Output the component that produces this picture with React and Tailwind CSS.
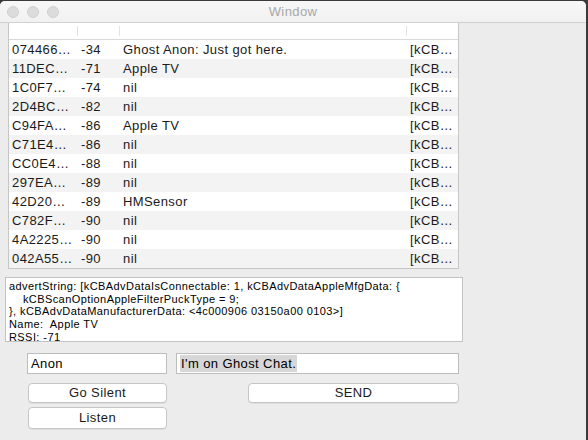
import React from "react";

const rows = [
  ["074466…", "-34", "Ghost Anon: Just got here."],
  ["11DEC…", "-71", "Apple TV"],
  ["1C0F7…", "-74", "nil"],
  ["2D4BC…", "-82", "nil"],
  ["C94FA…", "-86", "Apple TV"],
  ["C71E4…", "-86", "nil"],
  ["CC0E4…", "-88", "nil"],
  ["297EA…", "-89", "nil"],
  ["42D20…", "-89", "HMSensor"],
  ["C782F…", "-90", "nil"],
  ["4A2225…", "-90", "nil"],
  ["042A55…", "-90", "nil"],
];

const font = { fontFamily: '"Liberation Sans", Arial, Helvetica, sans-serif' };

export default function App() {
  return (
    <div className="w-[588px] h-[440px] bg-[#3a3a3a] overflow-hidden" style={font}>
      <div className="mt-px w-[586px] h-[439px] bg-[#ececec] rounded-t-[5px] overflow-hidden flex flex-col">
        {/* Title bar */}
        <div className="h-[22px] shrink-0 relative bg-gradient-to-b from-[#f7f7f7] to-[#f1f1f1] border-b border-[#d1d1d1] flex items-center">
          <div className="flex gap-[8px] pl-[7px]">
            <div className="w-[12px] h-[12px] rounded-full bg-[#dcdcdc] border border-[#d0d0d0]" />
            <div className="w-[12px] h-[12px] rounded-full bg-[#dcdcdc] border border-[#d0d0d0]" />
            <div className="w-[12px] h-[12px] rounded-full bg-[#dcdcdc] border border-[#d0d0d0]" />
          </div>
          <div className="absolute inset-0 flex items-center justify-center text-[13px] tracking-[0.4px] text-[#a8a8a8]">
            Window
          </div>
        </div>

        {/* Table */}
        <div className="ml-[8px] w-[451px] h-[246px] shrink-0 bg-white border-l border-r border-b border-[#c6c6c6] overflow-hidden flex flex-col">
          <div className="h-[17px] shrink-0 flex border-b border-[#d9d9d9]">
            <div className="w-[69px] flex justify-end items-center"><div className="w-px h-[10px] bg-[#e2e2e2]" /></div>
            <div className="w-[42px] flex justify-end items-center"><div className="w-px h-[10px] bg-[#e2e2e2]" /></div>
            <div className="w-[287px] flex justify-end items-center"><div className="w-px h-[10px] bg-[#e2e2e2]" /></div>
            <div className="flex-1" />
          </div>
          {rows.map((r, i) => (
            <div
              key={i}
              className={`h-[19px] shrink-0 flex items-center text-[13px] tracking-[0.4px] text-[#1a1a1a] ${i % 2 === 1 ? "bg-[#f3f3f3]" : "bg-white"}`}
            >
              <div className="w-[69px] pl-[3px] whitespace-nowrap overflow-hidden">{r[0]}</div>
              <div className="w-[42px] pl-[3px]">{r[1]}</div>
              <div className="w-[287px] pl-[3px] whitespace-nowrap">{r[2]}</div>
              <div className="flex-1 pl-[3px] whitespace-nowrap">[kCB…</div>
            </div>
          ))}
        </div>

        {/* Text view */}
        <div className="ml-[5px] mt-[8px] w-[458px] h-[65px] shrink-0 bg-white border border-[#c3c3c3] overflow-hidden pl-[3px] pt-[2px] text-[11px] tracking-[0.42px] leading-[12.7px] text-black whitespace-pre">
          {"advertString: [kCBAdvDataIsConnectable: 1, kCBAdvDataAppleMfgData: {\n    kCBScanOptionAppleFilterPuckType = 9;\n}, kCBAdvDataManufacturerData: <4c000906 03150a00 0103>]\nName:  Apple TV\nRSSI: -71"}
        </div>

        {/* Fields */}
        <div className="mt-[11px] flex gap-[9px] ml-[27px] shrink-0">
          <div className="w-[140px] h-[21px] bg-white border border-[#bdbdbd] flex items-center pl-[3px] text-[13px] tracking-[0.4px] text-black">
            Anon
          </div>
          <div className="w-[283px] h-[21px] bg-white border border-[#bdbdbd] flex items-center pl-[3px] text-[13px] tracking-[0.4px] text-black">
            <span className="bg-[#d7d7d7] px-px leading-[17px]">I'm on Ghost Chat.</span>
          </div>
        </div>

        {/* Buttons */}
        <div className="mt-[9px] ml-[28px] flex gap-[81px] shrink-0">
          <div className="w-[139px] h-[20px] bg-white rounded-[4px] border border-[#c5c5c5] shadow-[0_1px_0_rgba(0,0,0,0.06)] flex items-center justify-center text-[13px] tracking-[0.4px] text-[#1a1a1a]">
            Go Silent
          </div>
          <div className="w-[211px] h-[20px] bg-white rounded-[4px] border border-[#c5c5c5] shadow-[0_1px_0_rgba(0,0,0,0.06)] flex items-center justify-center text-[13px] tracking-[0.4px] text-[#1a1a1a]">
            SEND
          </div>
        </div>
        <div className="mt-[4px] ml-[28px] shrink-0">
          <div className="w-[139px] h-[22px] bg-white rounded-[4px] border border-[#c5c5c5] shadow-[0_1px_0_rgba(0,0,0,0.06)] flex items-center justify-center text-[13px] tracking-[0.4px] text-[#1a1a1a]">
            Listen
          </div>
        </div>
      </div>
    </div>
  );
}
